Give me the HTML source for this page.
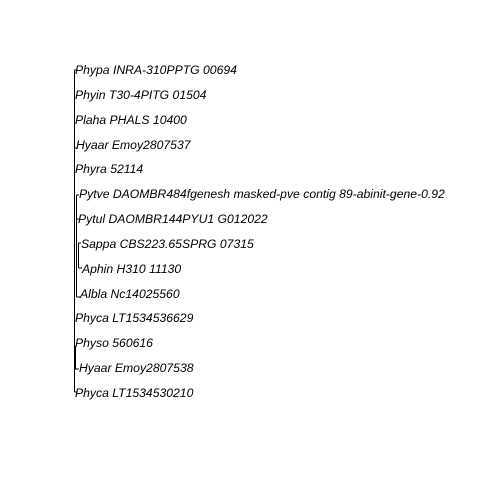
<html><body style="margin:0;background:#fff">
<svg width="480" height="480" xmlns="http://www.w3.org/2000/svg" style="display:block">
<g stroke="#000" stroke-width="1" fill="none">
<path d="M74.5 70V392M74.5 70H77M74.5 148H77M74.5 392H77"/>
<path d="M76.5 195V297M76.5 195H79M76.5 219H79M76.5 297H80"/>
<path d="M78.5 243V268M78.5 243H81M78.5 268H82"/>
<path d="M75.5 346V369H79"/>
</g>
<g font-family="Liberation Sans, sans-serif" font-style="italic" font-size="12.2" fill="#000">
<text x="75" y="74">Phypa INRA-310PPTG 00694</text>
<text x="75" y="99">Phyin T30-4PITG 01504</text>
<text x="75" y="124">Plaha PHALS 10400</text>
<text x="76" y="149">Hyaar Emoy2807537</text>
<text x="75" y="173">Phyra 52114</text>
<text x="79" y="198">Pytve DAOMBR484fgenesh masked-pve contig 89-abinit-gene-0.92</text>
<text x="78" y="223">Pytul DAOMBR144PYU1 G012022</text>
<text x="81" y="248">Sappa CBS223.65SPRG 07315</text>
<text x="82" y="273">Aphin H310 11130</text>
<text x="80" y="298">Albla Nc14025560</text>
<text x="75" y="322">Phyca LT1534536629</text>
<text x="75" y="347">Physo 560616</text>
<text x="79" y="372">Hyaar Emoy2807538</text>
<text x="75" y="397">Phyca LT1534530210</text>
</g>
</svg>
</body></html>
